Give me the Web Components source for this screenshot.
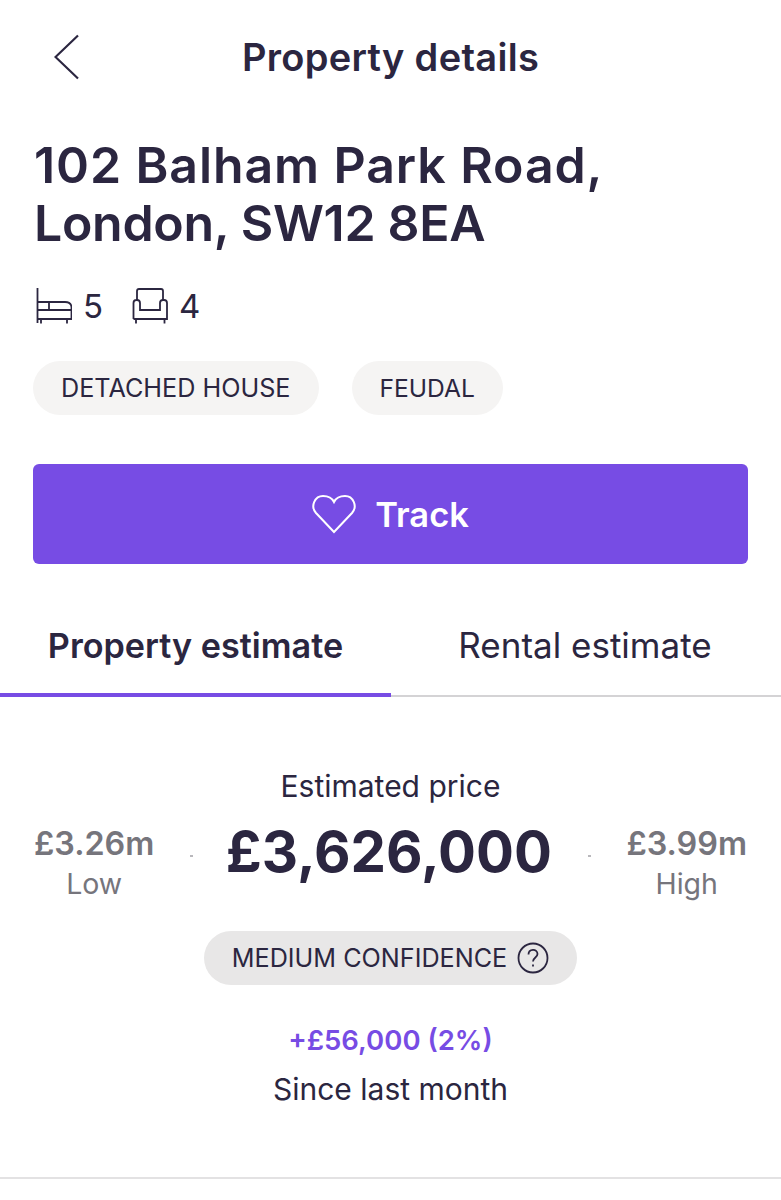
<!DOCTYPE html>
<html>
<head>
<meta charset="utf-8">
<style>
  html, body { margin: 0; padding: 0; background: #fff; }
  body { font-family: Inter, "Liberation Sans", sans-serif; color: #2b2640; width: 781px; height: 1200px; overflow: hidden; }
</style>
</head>
<body>
<property-page></property-page>
<script>
class NavBar extends HTMLElement {
    constructor() {
        super();
        this.attachShadow({ mode: 'open' });
        this.shadowRoot.innerHTML = `
        <style>
          :host { display: grid; grid-template-columns: 1fr auto 1fr; align-items: center; height: 114px; padding-left: 54px; box-sizing: border-box; padding-right: 54px; }
          svg { display: block; }
          h1 { margin: 0; font-size: 38px; font-weight: 600; letter-spacing: .3px; }
        </style>
        <svg width="26" height="46" viewBox="0 0 26 46" fill="none" stroke="#2b2640" stroke-width="2.2"><path d="M24 1.500 L1.500 23 L24 44.500"/></svg>
        <h1><slot></slot></h1>
        <span></span>`;
    }
}

class PillTag extends HTMLElement {
    constructor() {
        super();
        this.attachShadow({ mode: 'open' });
        this.shadowRoot.innerHTML = `
        <style>
          :host { display: inline-flex; align-items: center; gap: 10px; height: 54px; padding: 0 28px; border-radius: 27px; background: #f5f4f3; font-size: 25.200px; color: #2b2640; white-space: nowrap; box-sizing: border-box; }
          :host([tone="dark"]) { background: #e8e7e7; }
        </style>
        <slot></slot>`;
    }
}

class PriceSide extends HTMLElement {
    constructor() {
        super();
        this.attachShadow({ mode: 'open' });
        this.shadowRoot.innerHTML = `
        <style>
          :host { display: block; text-align: center; color: #76757c; padding-top: 21px; }
          .amount { font-size: 32.300px; font-weight: 600; line-height: 40px; }
          .label { font-size: 28.500px; line-height: 40px; }
        </style>
        <div class="amount">${this.getAttribute('amount')}</div>
        <div class="label">${this.getAttribute('label')}</div>`;
    }
}

class EstimateTabs extends HTMLElement {
    constructor() {
        super();
        this.attachShadow({ mode: 'open' });
        this.shadowRoot.innerHTML = `
        <style>
          :host { display: grid; grid-template-columns: 391px 390px; height: 78px; font-size: 34.200px; }
          div { display: flex; justify-content: center; align-items: flex-start; padding-top: 6px; box-sizing: border-box; border-bottom: 2px solid #d4d3d5; }
          .on { font-weight: 600; border-bottom: 4px solid #774ce4; }
          .off { font-size: 35px; padding-top: 5px; padding-right: 2px; }
        </style>
        <div class="on">Property estimate</div>
        <div class="off">Rental estimate</div>`;
    }
}

class PropertyPage extends HTMLElement {
    constructor() {
        super();
        this.attachShadow({ mode: 'open' });
        this.shadowRoot.innerHTML = `
        <style>
          :host { display: block; }
          .head { padding: 22px 33px 0; }
          h2 { margin: 0 0 0 1px; font-size: 50px; line-height: 58px; font-weight: 600; }
          .l1 { letter-spacing: .9px; }
          .l2 { letter-spacing: -.3px; }
          .rooms { display: flex; align-items: center; height: 40px; margin-top: 34px; padding-left: 3px; font-size: 33px; }
          .rooms svg { display: block; margin-right: 11px; }
          .rooms span { margin-right: 29px; }
          .tags { display: flex; gap: 33px; margin-top: 35px; }
          .feudal { font-size: 24.600px; }
          .track { display: flex; align-items: center; justify-content: center; gap: 19px; height: 100px; margin-top: 49px; background: #774ce4; border-radius: 6px; color: #fff; font-size: 34.500px; font-weight: 600; }
          .track svg { display: block; }
          estimate-tabs { margin-top: 55px; }
          .est { display: flex; flex-direction: column; align-items: center; padding-top: 72px; }
          .cap { font-size: 30px; line-height: 34px; }
          .row { display: flex; width: 100%; align-items: flex-start; justify-content: space-between; box-sizing: border-box; padding: 0 34px; }
          .big { font-size: 56.300px; font-weight: 700; line-height: 70px; margin-top: 14px; margin-left: -3px; }
          .dot { width: 3px; height: 2px; margin-top: 5px; background: #b9b8bc; align-self: center; }
          .conf { margin-top: 27px; }
          .delta { margin-top: 38px; font-size: 27.500px; font-weight: 600; color: #774ce4; line-height: 34px; }
          .since { margin-top: 15px; font-size: 30px; line-height: 34px; }
          hr { border: 0; border-top: 2px solid #e3e2e3; margin: 71px 0 0; }
        </style>
        <nav-bar>Property details</nav-bar>
        <div class="head">
          <h2><span class="l1">102 Balham Park Road,</span><br><span class="l2">London, SW12 8EA</span></h2>
          <div class="rooms">
            <svg width="36" height="36" viewBox="0 0 36 36" fill="none" stroke="#2b2640" stroke-width="1.800"><path d="M1.500 0V35M1.500 14H29Q35 14 35.500 19V31H1.500M1.500 22H35.500M13 14V22M5 31V35.500M31 31V35.500"/></svg>
            <span>5</span>
            <svg width="36" height="36" viewBox="0 0 36 36" fill="none" stroke="#2b2640" stroke-width="1.800"><path d="M5 12V3Q5 1 7 1H29Q31 1 31 3V12M1.500 31V15Q1.500 12 4.500 12H5Q8 12 8 15V22H28V15Q28 12 31 12H32Q35 12 35 15V31H1.500M4 31V35.500M32.500 31V35.500"/></svg>
            <span>4</span>
          </div>
          <div class="tags"><pill-tag>DETACHED HOUSE</pill-tag><pill-tag class="feudal">FEUDAL</pill-tag></div>
          <div class="track">
            <svg width="44" height="40" viewBox="0 0 44 40" fill="none" stroke="#fff" stroke-width="2"><path d="M22 38 L4 19 C-2 12 3 2 11 2 C16 2 20 4 22 8 C24 4 28 2 33 2 C41 2 46 12 40 19 Z"/></svg>
            Track
          </div>
        </div>
        <estimate-tabs></estimate-tabs>
        <div class="est">
          <div class="cap">Estimated price</div>
          <div class="row">
            <price-side amount="£3.26m" label="Low"></price-side>
            <span class="dot"></span>
            <div class="big">£3,626,000</div>
            <span class="dot"></span>
            <price-side amount="£3.99m" label="High"></price-side>
          </div>
          <pill-tag class="conf" tone="dark">MEDIUM CONFIDENCE
            <svg width="32" height="32" viewBox="0 0 32 32" fill="none" stroke="#2b2640" stroke-width="1.800"><circle cx="16" cy="16" r="14.500"/><path d="M11.500 12.500C11.500 6.500 20.500 6.500 20.500 12C20.500 15.500 16 15.500 16 19.500M16 22.500V24.500"/></svg>
          </pill-tag>
          <div class="delta">+£56,000 (2%)</div>
          <div class="since">Since last month</div>
        </div>
        <hr>`;
    }
}

customElements.define('nav-bar', NavBar);
customElements.define('pill-tag', PillTag);
customElements.define('price-side', PriceSide);
customElements.define('estimate-tabs', EstimateTabs);
customElements.define('property-page', PropertyPage);
</script>
</body>
</html>
